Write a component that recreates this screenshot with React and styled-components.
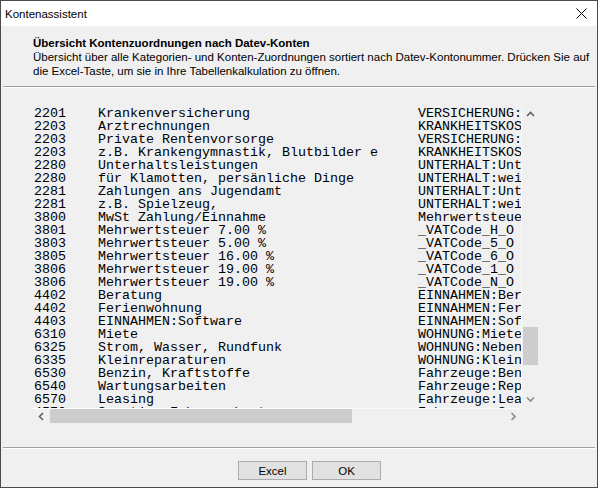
import React from 'react';
import styled, { createGlobalStyle } from 'styled-components';

const GlobalStyle = createGlobalStyle`
  html, body {
    margin: 0;
    padding: 0;
    background: #f0f0f0;
  }
  * {
    box-sizing: border-box;
  }
`;

const Window = styled.div`
  width: 598px;
  height: 488px;
  border: 1px solid #4b4b4b;
  background: #f0f0f0;
  display: flex;
  flex-direction: column;
  font-family: "Liberation Sans", Arial, sans-serif;
  font-size: 11.5px;
  color: #000;
  overflow: hidden;
`;

const TitleBar = styled.div`
  height: 25px;
  flex-shrink: 0;
  background: #fff;
  display: flex;
  align-items: center;
  justify-content: space-between;
  padding: 0 10px 0 4px;
  font-size: 11.5px;
`;

const Header = styled.div`
  height: 60px;
  flex-shrink: 0;
  padding: 10px 0 0 32px;
  white-space: nowrap;
`;

const HeaderTitle = styled.div`
  font-weight: bold;
  line-height: 14px;
`;

const HeaderText = styled.div`
  line-height: 14px;
`;

const Separator = styled.div`
  height: 2px;
  flex-shrink: 0;
  margin: 0 2px;
  border-top: 1px solid #a0a0a0;
  border-bottom: 1px solid #ffffff;
`;

const ListSection = styled.div`
  padding: 18px 0 0 32px;
  height: 359px;
  flex-shrink: 0;
`;

const ListBox = styled.div`
  width: 506px;
  display: flex;
  flex-direction: column;
`;

const ViewRow = styled.div`
  display: flex;
  height: 302px;
`;

const Content = styled.div`
  width: 489px;
  height: 302px;
  overflow: hidden;
  padding: 1px 0 0 1px;
  border-right: 1px solid #fafafa;
  font-family: "Liberation Mono", "Courier New", monospace;
  font-size: 13.33px;
  line-height: 13px;
  white-space: pre;
`;

const Row = styled.div`
  display: grid;
  grid-template-columns: 64px 320px 160px;
  height: 13px;
`;

const VScroll = styled.div`
  width: 17px;
  display: flex;
  flex-direction: column;
`;

const ArrowButton = styled.div`
  width: 17px;
  height: 17px;
  display: flex;
  align-items: center;
  justify-content: center;
  flex-shrink: 0;
`;

const Track = styled.div`
  flex: 1;
  position: relative;
`;

const VThumb = styled.div`
  position: absolute;
  left: 1px;
  width: 15px;
  background: #cdcdcd;
`;

const HRow = styled.div`
  display: flex;
  height: 15px;
`;

const HScroll = styled.div`
  width: 489px;
  display: flex;
  border-top: 1px solid #fafafa;
`;

const HArrow = styled.div`
  width: 17px;
  display: flex;
  align-items: center;
  justify-content: center;
  flex-shrink: 0;
`;

const HTrack = styled.div`
  flex: 1;
  display: flex;
`;

const HThumb = styled.div`
  height: 14px;
  background: #cdcdcd;
`;

const Footer = styled.div`
  display: flex;
  gap: 5px;
  padding: 12px 0 0 237px;
`;

const Button = styled.button`
  width: 69px;
  height: 19px;
  background: #e1e1e1;
  border: 1px solid #adadad;
  font-family: "Liberation Sans", Arial, sans-serif;
  font-size: 11.5px;
  color: #000;
  padding: 0;
`;

const rows = [
  ['2201', 'Krankenversicherung', 'VERSICHERUNG:'],
  ['2203', 'Arztrechnungen', 'KRANKHEITSKOS'],
  ['2203', 'Private Rentenvorsorge', 'VERSICHERUNG:'],
  ['2203', 'z.B. Krankengymnastik, Blutbilder e', 'KRANKHEITSKOS'],
  ['2280', 'Unterhaltsleistungen', 'UNTERHALT:Unt'],
  ['2280', 'für Klamotten, persänliche Dinge', 'UNTERHALT:wei'],
  ['2281', 'Zahlungen ans Jugendamt', 'UNTERHALT:Unt'],
  ['2281', 'z.B. Spielzeug,', 'UNTERHALT:wei'],
  ['3800', 'MwSt Zahlung/Einnahme', 'Mehrwertsteue'],
  ['3801', 'Mehrwertsteuer 7.00 %', '_VATCode_H_O'],
  ['3803', 'Mehrwertsteuer 5.00 %', '_VATCode_5_O'],
  ['3805', 'Mehrwertsteuer 16.00 %', '_VATCode_6_O'],
  ['3806', 'Mehrwertsteuer 19.00 %', '_VATCode_1_O'],
  ['3806', 'Mehrwertsteuer 19.00 %', '_VATCode_N_O'],
  ['4402', 'Beratung', 'EINNAHMEN:Ber'],
  ['4402', 'Ferienwohnung', 'EINNAHMEN:Fer'],
  ['4403', 'EINNAHMEN:Software', 'EINNAHMEN:Sof'],
  ['6310', 'Miete', 'WOHNUNG:Miete'],
  ['6325', 'Strom, Wasser, Rundfunk', 'WOHNUNG:Neben'],
  ['6335', 'Kleinreparaturen', 'WOHNUNG:Klein'],
  ['6530', 'Benzin, Kraftstoffe', 'Fahrzeuge:Ben'],
  ['6540', 'Wartungsarbeiten', 'Fahrzeuge:Rep'],
  ['6570', 'Leasing', 'Fahrzeuge:Lea'],
  ['4570', 'Sonstige Fahrzeugkosten', 'Fahrzeuge:Son'],
];

function Chevron({ dir, color = '#606060' }) {
  const pts = {
    up: '1,5 4.5,1.5 8,5',
    down: '1,1.5 4.5,5 8,1.5',
    left: '5,1 1.5,4.5 5,8',
    right: '1.5,1 5,4.5 1.5,8',
  }[dir];
  const vertical = dir === 'up' || dir === 'down';
  return (
    <svg width={vertical ? 9 : 7} height={vertical ? 7 : 9} viewBox={vertical ? '0 0 9 7' : '0 0 7 9'}>
      <polyline points={pts} fill="none" stroke={color} strokeWidth="1.6" />
    </svg>
  );
}

function CloseIcon() {
  return (
    <svg width="11" height="11" viewBox="0 0 11 11">
      <path d="M0.5 0.5 L10.5 10.5 M10.5 0.5 L0.5 10.5" stroke="#000" strokeWidth="1" />
    </svg>
  );
}

export default function App() {
  const thumbTop = 204;
  const thumbHeight = 38;

  return (
    <>
      <GlobalStyle />
      <Window>
        <TitleBar>
          <span>Kontenassistent</span>
          <CloseIcon />
        </TitleBar>
        <Header>
          <HeaderTitle>Übersicht Kontenzuordnungen nach Datev-Konten</HeaderTitle>
          <HeaderText>
            Übersicht über alle Kategorien- und Konten-Zuordnungen sortiert nach Datev-Kontonummer. Drücken Sie auf
          </HeaderText>
          <HeaderText>die Excel-Taste, um sie in Ihre Tabellenkalkulation zu öffnen.</HeaderText>
        </Header>
        <Separator />
        <ListSection>
          <ListBox>
            <ViewRow>
              <Content>
                {rows.map((r, i) => (
                  <Row key={i}>
                    <span>{r[0]}</span>
                    <span>{r[1]}</span>
                    <span>{r[2]}</span>
                  </Row>
                ))}
              </Content>
              <VScroll>
                <ArrowButton>
                  <Chevron dir="up" />
                </ArrowButton>
                <Track>
                  <VThumb style={{ top: thumbTop, height: thumbHeight }} />
                </Track>
                <ArrowButton>
                  <Chevron dir="down" color="#8a8a8a" />
                </ArrowButton>
              </VScroll>
            </ViewRow>
            <HRow>
              <HScroll>
                <HArrow>
                  <Chevron dir="left" />
                </HArrow>
                <HTrack>
                  <HThumb style={{ width: 302 }} />
                </HTrack>
                <HArrow>
                  <Chevron dir="right" color="#8a8a8a" />
                </HArrow>
              </HScroll>
            </HRow>
          </ListBox>
        </ListSection>
        <Separator />
        <Footer>
          <Button>Excel</Button>
          <Button>OK</Button>
        </Footer>
      </Window>
    </>
  );
}
